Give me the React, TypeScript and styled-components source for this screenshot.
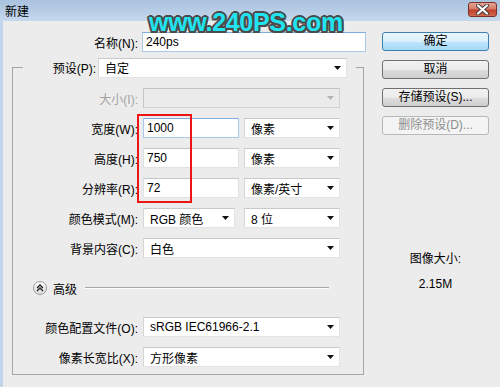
import React from "react";
import styled, { createGlobalStyle } from "styled-components";

const GlobalStyle = createGlobalStyle`
  html, body {
    margin: 0;
    padding: 0;
    background: #ececec;
  }
  body {
    font-family: "Liberation Sans", "Noto Sans CJK SC", sans-serif;
    font-size: 12px;
    color: #000;
  }
`;

const Window = styled.div`
  position: relative;
  width: 500px;
  height: 387px;
  overflow: hidden;
  background: #ececec;
`;

const TitleBar = styled.div`
  height: 21px;
  display: flex;
  align-items: center;
  padding: 0 3px 0 5px;
  background: linear-gradient(#a9c2de, #c5d8ed);
`;

const Title = styled.span`
  font-size: 12px;
  color: #000;
`;

const CloseButton = styled.div`
  margin-left: auto;
  margin-top: -2px;
  width: 29px;
  height: 15px;
  box-sizing: border-box;
  border: 1px solid #7a3226;
  border-radius: 3px;
  background: linear-gradient(#e7a596 0%, #d47a66 45%, #c2402b 55%, #cf6a50 100%);
  display: flex;
  align-items: center;
  justify-content: center;
`;

const Body = styled.div`
  display: flex;
  height: 366px;
  box-sizing: border-box;
  border-left: 3px solid #c3d5ea;
`;

const LeftPane = styled.div`
  width: 367px;
  padding-top: 11px;
  display: flex;
  flex-direction: column;
`;

const RightPane = styled.div`
  width: 107px;
  margin-left: 12px;
  padding-top: 11px;
  display: flex;
  flex-direction: column;
`;

const Row = styled.div`
  display: flex;
  align-items: center;
  height: 20px;
`;

const Label = styled.span<{ $w: number; $disabled?: boolean }>`
  width: ${(p) => p.$w}px;
  flex-shrink: 0;
  text-align: right;
  white-space: nowrap;
  color: ${(p) => (p.$disabled ? "#a3a3a3" : "#000")};
`;

const TextInput = styled.div<{ $w: number; $focus?: boolean }>`
  width: ${(p) => p.$w}px;
  height: 20px;
  box-sizing: border-box;
  padding-left: 3px;
  line-height: 18px;
  background: #fff;
  border: 1px solid ${(p) => (p.$focus ? "#a9c9ea" : "#dfe3e8")};
  border-top-color: ${(p) => (p.$focus ? "#7eaee0" : "#c2c6cc")};
`;

const Fields = styled.div<{ $gap: number }>`
  display: flex;
  margin-left: 5px;
  gap: ${(p) => p.$gap}px;
`;

const SelectBox = styled.div<{ $w: number; $disabled?: boolean }>`
  width: ${(p) => p.$w}px;
  height: 20px;
  box-sizing: border-box;
  display: flex;
  align-items: center;
  padding: 0 5px 0 6px;
  white-space: nowrap;
  background: ${(p) => (p.$disabled ? "#ebebeb" : "#fff")};
  border: 1px solid ${(p) => (p.$disabled ? "#d2d2d2" : "#e4e4e4")};
  border-top-color: ${(p) => (p.$disabled ? "#c4c4c4" : "#c8c8c8")};
  border-left-color: ${(p) => (p.$disabled ? "#c4c4c4" : "#d6d6d6")};
  svg {
    margin-left: auto;
    flex-shrink: 0;
  }
`;

const GroupBox = styled.fieldset`
  margin: 5px 0 0 9px;
  padding: 10px 0 7px;
  width: 352px;
  box-sizing: border-box;
  border: 1px solid #a6a6a6;
  min-width: 0;
`;

const GroupLegend = styled.legend`
  margin-left: 10px;
  padding: 0 9px 0 3px;
  display: flex;
  align-items: center;
  height: 21px;
`;

const Rows = styled.div`
  display: flex;
  flex-direction: column;
  gap: 10px;
`;

const AdvancedRow = styled.div`
  display: flex;
  align-items: center;
  height: 20px;
  margin: 20px 0 19px;
  padding-left: 20px;
`;

const Toggle = styled.div`
  width: 14px;
  height: 14px;
  box-sizing: border-box;
  border-radius: 50%;
  border: 1px solid #9a9a9a;
  background: linear-gradient(#ffffff, #dcdcdc);
  display: flex;
  align-items: center;
  justify-content: center;
`;

const AdvancedText = styled.span`
  margin-left: 6px;
`;

const Divider = styled.div`
  flex: 1;
  margin: 0 34px 0 8px;
  height: 1px;
  background: #a8a8a8;
  border-bottom: 1px solid #fff;
`;

const Button = styled.div<{ $primary?: boolean; $disabled?: boolean }>`
  height: 19px;
  box-sizing: border-box;
  border-radius: 3px;
  text-align: center;
  line-height: 17px;
  border: 1px solid ${(p) => (p.$primary ? "#3c7fb1" : p.$disabled ? "#b5b9bc" : "#707070")};
  color: ${(p) => (p.$disabled ? "#8d8d8d" : "#000")};
  background: ${(p) =>
    p.$primary
      ? "linear-gradient(#eaf6fd 0%, #d9f0fc 50%, #bee6fd 51%, #a7d9f5 100%)"
      : p.$disabled
      ? "#f4f4f4"
      : "linear-gradient(#f2f2f2 0%, #ebebeb 50%, #dddddd 51%, #cfcfcf 100%)"};
  & + & {
    margin-top: 9px;
  }
`;

const Info = styled.div`
  margin-top: 116px;
  display: flex;
  flex-direction: column;
  align-items: center;
  gap: 9px;
  line-height: 16px;
`;

const Watermark = styled.div`
  position: absolute;
  left: 149px;
  top: 8px;
  font-family: "Liberation Sans", sans-serif;
  font-weight: bold;
  font-size: 25px;
  letter-spacing: -0.3px;
  color: #22e4f1;
  text-shadow: 2px 0 0 #4a4a4a, -2px 0 0 #4a4a4a, 0 2px 0 #4a4a4a, 0 -2px 0 #4a4a4a,
    1.5px 1.5px 0 #4a4a4a, -1.5px 1.5px 0 #4a4a4a, 1.5px -1.5px 0 #4a4a4a, -1.5px -1.5px 0 #4a4a4a;
`;

const Highlight = styled.div`
  position: absolute;
  left: 137px;
  top: 114px;
  width: 55px;
  height: 89px;
  box-sizing: border-box;
  border: 2px solid #ee1414;
`;

const Arrow = ({ disabled }: { disabled?: boolean }) => (
  <svg width="7" height="4" viewBox="0 0 7 4">
    <path d="M0 0H7L3.5 4Z" fill={disabled ? "#b4b4b4" : "#111"} />
  </svg>
);

const Select = ({ w, value, disabled }: { w: number; value: string; disabled?: boolean }) => (
  <SelectBox $w={w} $disabled={disabled}>
    {value}
    <Arrow disabled={disabled} />
  </SelectBox>
);

const App = () => {
  return (
    <Window>
      <GlobalStyle />
      <TitleBar>
        <Title>新建</Title>
        <CloseButton>
          <svg width="13" height="11" viewBox="0 0 13 11">
            <path d="M2 1.5L11 9.5M11 1.5L2 9.5" stroke="#3d3d3d" strokeWidth="4" strokeLinecap="round" />
            <path d="M2 1.5L11 9.5M11 1.5L2 9.5" stroke="#fff" strokeWidth="2.2" strokeLinecap="round" />
          </svg>
        </CloseButton>
      </TitleBar>
      <Body>
        <LeftPane>
          <Row>
            <Label $w={135}>名称(N):</Label>
            <TextInput $w={224} $focus style={{ marginLeft: 4 }}>
              240ps
            </TextInput>
          </Row>
          <GroupBox>
            <GroupLegend>
              <Label $w={70}>预设(P):</Label>
              <Fields $gap={0} style={{ marginLeft: 2 }}>
                <Select w={249} value="自定" />
              </Fields>
            </GroupLegend>
            <Rows>
              <Row>
                <Label $w={125} $disabled>
                  大小(I):
                </Label>
                <Fields $gap={0}>
                  <Select w={197} value="" disabled />
                </Fields>
              </Row>
              <Row>
                <Label $w={125}>宽度(W):</Label>
                <Fields $gap={5}>
                  <TextInput $w={96} $focus>
                    1000
                  </TextInput>
                  <Select w={96} value="像素" />
                </Fields>
              </Row>
              <Row>
                <Label $w={125}>高度(H):</Label>
                <Fields $gap={5}>
                  <TextInput $w={96}>750</TextInput>
                  <Select w={96} value="像素" />
                </Fields>
              </Row>
              <Row>
                <Label $w={125}>分辨率(R):</Label>
                <Fields $gap={5}>
                  <TextInput $w={96}>72</TextInput>
                  <Select w={96} value="像素/英寸" />
                </Fields>
              </Row>
              <Row>
                <Label $w={125}>颜色模式(M):</Label>
                <Fields $gap={9}>
                  <Select w={92} value="RGB 颜色" />
                  <Select w={96} value="8 位" />
                </Fields>
              </Row>
              <Row>
                <Label $w={125}>背景内容(C):</Label>
                <Fields $gap={0}>
                  <Select w={197} value="白色" />
                </Fields>
              </Row>
            </Rows>
            <AdvancedRow>
              <Toggle>
                <svg width="10" height="10" viewBox="0 0 10 10">
                  <path d="M2 5L5 2L8 5M2 8L5 5L8 8" fill="none" stroke="#222" strokeWidth="1.4" />
                </svg>
              </Toggle>
              <AdvancedText>高级</AdvancedText>
              <Divider />
            </AdvancedRow>
            <Rows>
              <Row>
                <Label $w={125}>颜色配置文件(O):</Label>
                <Fields $gap={0}>
                  <Select w={197} value="sRGB IEC61966-2.1" />
                </Fields>
              </Row>
              <Row>
                <Label $w={125}>像素长宽比(X):</Label>
                <Fields $gap={0}>
                  <Select w={197} value="方形像素" />
                </Fields>
              </Row>
            </Rows>
          </GroupBox>
        </LeftPane>
        <RightPane>
          <Button $primary>确定</Button>
          <Button>取消</Button>
          <Button>存储预设(S)...</Button>
          <Button $disabled>删除预设(D)...</Button>
          <Info>
            <span>图像大小:</span>
            <span>2.15M</span>
          </Info>
        </RightPane>
      </Body>
      <Watermark>www.240PS.com</Watermark>
      <Highlight />
    </Window>
  );
};

export default App;
